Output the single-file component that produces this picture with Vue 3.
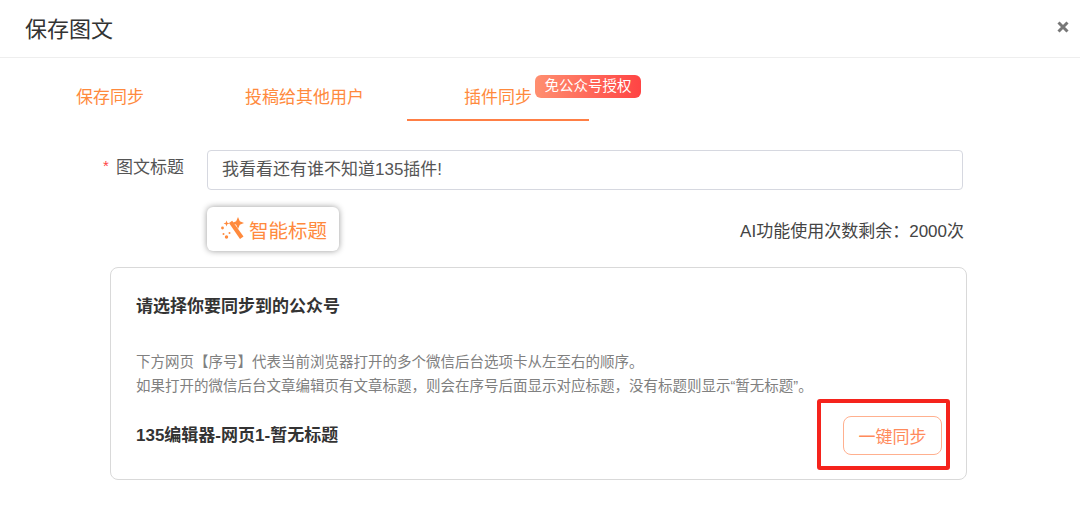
<script setup>
const tabs = ['保存同步', '投稿给其他用户', '插件同步']
</script>

<template>
  <div class="dialog">
    <header class="head">
      <h2>保存图文</h2>
      <svg class="close" width="12" height="12" viewBox="0 0 12 12">
        <path d="M1.5 1.5l9 9M10.5 1.5l-9 9" stroke="#777" stroke-width="3" />
      </svg>
    </header>

    <nav class="tabs">
      <div v-for="(t, i) in tabs" :key="t" class="tab" :class="'tab' + i">
        {{ t }}
        <span v-if="i === 2" class="badge">免公众号授权</span>
      </div>
    </nav>

    <div class="form-row">
      <label><i>*</i>图文标题</label>
      <div class="input">我看看还有谁不知道135插件!</div>
    </div>

    <div class="ai-row">
      <button class="ai-btn">
        <svg width="24" height="24" viewBox="0 0 24 24" fill="#ff8a3d">
          <path d="M18 0l1.800 4.200L24 6l-4.200 1.800L18 12l-1.800-4.200L12 6l4.200-1.800z" />
          <path d="M9 6l3.200-2.200L23.500 19.500 20 22z" />
          <path d="M6.500 3.500l.8 2.200 2.200.8-2.200.8-.8 2.200-.8-2.200-2.200-.8 2.200-.8z" />
          <circle cx="2.500" cy="11" r="1.400" />
          <circle cx="6.500" cy="20" r="1.700" />
          <circle cx="3.500" cy="17" r="1" />
          <circle cx="9.500" cy="16" r="1" />
        </svg>
        智能标题
      </button>
      <span class="ai-left">AI功能使用次数剩余：2000次</span>
    </div>

    <section class="card">
      <h3>请选择你要同步到的公众号</h3>
      <p class="desc">
        下方网页【序号】代表当前浏览器打开的多个微信后台选项卡从左至右的顺序。<br />
        如果打开的微信后台文章编辑页有文章标题，则会在序号后面显示对应标题，没有标题则显示“暂无标题”。
      </p>
      <div class="item">
        <span class="item-name">135编辑器-网页1-暂无标题</span>
        <button class="sync">一键同步</button>
      </div>
      <div class="mark"></div>
    </section>
  </div>
</template>

<style>
html, body {
  margin: 0;
  background: #fff;
  overflow: hidden;
}
</style>

<style scoped>
.dialog {
  width: 1080px;
  height: 505px;
  background: #fff;
  font-family: "Liberation Sans", "Noto Sans CJK SC", sans-serif;
  color: #333;
}

.head {
  height: 53px;
  border-bottom: 1px solid #eee;
  display: flex;
  align-items: center;
  justify-content: space-between;
  padding: 0 11px 4px 25px;
}

.head h2 {
  margin: 0;
  font-size: 22px;
  font-weight: 400;
  color: #333;
}

.tabs {
  display: flex;
  height: 63px;
  padding-left: 76px;
  color: #ff8a3d;
  font-size: 17px;
}

.tab {
  position: relative;
  line-height: 79px;
  height: 63px;
  box-sizing: border-box;
}

.tab0 {
  width: 169px;
}

.tab1 {
  width: 162px;
}

.tab2 {
  width: 182px;
  padding-left: 57px;
  border-bottom: 2px solid #ff7f45;
}

.badge {
  position: absolute;
  left: 128px;
  top: 17px;
  width: 106px;
  height: 23px;
  border-radius: 6px;
  background: linear-gradient(90deg, #ff8f70, #ff4444);
  color: #fff;
  font-size: 14.5px;
  line-height: 22px;
  text-align: center;
}

.form-row {
  display: flex;
  align-items: center;
  margin-top: 29px;
  padding-left: 103px;
}

.form-row label {
  width: 104px;
  margin-bottom: 5px;
  font-size: 17px;
  line-height: 20px;
  color: #555;
}

.form-row i {
  display: inline-block;
  width: 13px;
  color: #f44;
  font-style: normal;
  font-size: 15px;
  line-height: 15px;
  vertical-align: 2px;
}

.input {
  width: 740px;
  height: 38px;
  border: 1px solid #d6d8e0;
  border-radius: 4px;
  padding-left: 14px;
  line-height: 37px;
  font-size: 17px;
  color: #555;
}

.ai-row {
  display: flex;
  align-items: center;
  justify-content: space-between;
  margin-top: 17px;
  padding-left: 207px;
  width: 757px;
}

.ai-btn {
  display: flex;
  align-items: center;
  gap: 5px;
  width: 132px;
  height: 44px;
  padding: 0 0 0 13px;
  border: 0;
  border-radius: 6px;
  background: #fff;
  box-shadow: 0 0 6px rgba(0, 0, 0, .4);
  color: #ff8a3d;
  font: inherit;
  font-size: 19.5px;
}

.ai-left {
  font-size: 17px;
  color: #444;
}

.card {
  position: relative;
  margin: 16px 0 0 110px;
  width: 857px;
  height: 213px;
  box-sizing: border-box;
  border: 1px solid #d9d9d9;
  border-radius: 8px;
  padding: 28px 25px 0;
}

.card h3 {
  margin: 0;
  font-size: 17px;
  line-height: 22px;
  font-weight: 700;
  color: #333;
}

.desc {
  margin: 32px 0 0;
  font-size: 14.5px;
  line-height: 24px;
  color: #808080;
}

.item {
  display: flex;
  align-items: center;
  justify-content: space-between;
  margin-top: 18px;
}

.item-name {
  margin-bottom: 4px;
  font-size: 17px;
  font-weight: 700;
  color: #333;
}

.sync {
  width: 99px;
  height: 39px;
  margin-right: -1px;
  border: 1px solid #ffb08f;
  border-radius: 8px;
  background: #fff;
  color: #ff8a5c;
  font: inherit;
  font-size: 17px;
}

.mark {
  position: absolute;
  left: 706px;
  top: 131px;
  width: 133px;
  height: 71px;
  box-sizing: border-box;
  border: 4px solid #f5231c;
  border-radius: 3px;
}
</style>
